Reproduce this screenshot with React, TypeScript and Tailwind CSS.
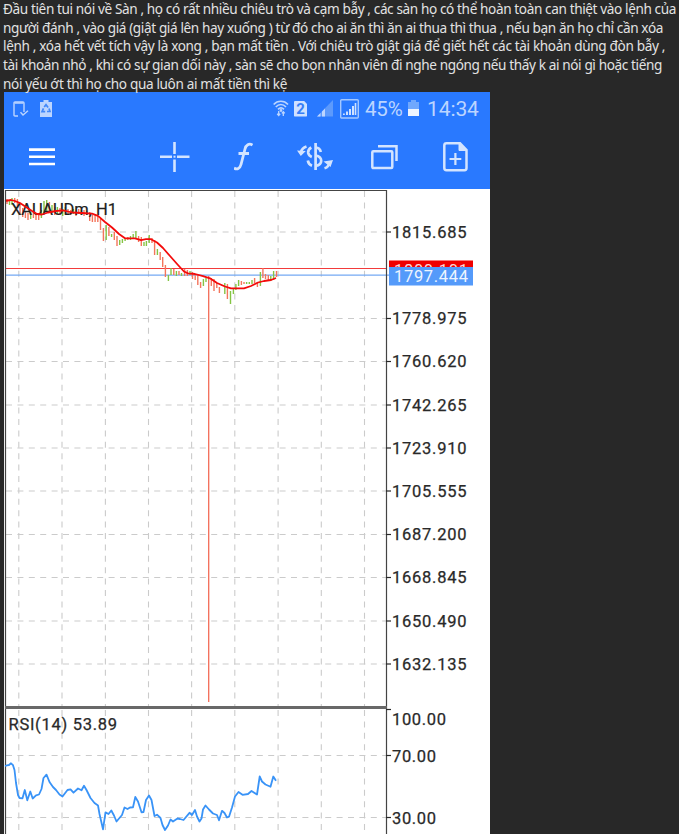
import React from 'react';

const post = [
  { text: 'Đầu tiên tui nói về Sàn , họ có rất nhiều chiêu trò và cạm bẫy , các sàn họ có thể hoàn toàn can thiệt vào lệnh của', width: 673 },
  { text: 'người đánh , vào giá (giật giá lên hay xuống ) từ đó cho ai ăn thì ăn ai thua thì thua , nếu bạn ăn họ chỉ cần xóa', width: 660 },
  { text: 'lệnh , xóa hết vết tích vậy là xong , bạn mất tiền . Với chiêu trò giật giá để giết hết các tài khoản dùng đòn bẫy ,', width: 662 },
  { text: 'tài khoản nhỏ , khi có sự gian dối này , sàn sẽ cho bọn nhân viên đi nghe ngóng nếu thấy k ai nói gì hoặc tiếng', width: 659 },
  { text: 'nói yếu ớt thì họ cho qua luôn ai mất tiền thì kệ', width: 284 },
];

const prices = [
  { label: '1815.685', y: 232 },
  { label: '1778.975', y: 318.5 },
  { label: '1760.620', y: 361.5 },
  { label: '1742.265', y: 405 },
  { label: '1723.910', y: 448 },
  { label: '1705.555', y: 491 },
  { label: '1687.200', y: 534.5 },
  { label: '1668.845', y: 577.5 },
  { label: '1650.490', y: 621 },
  { label: '1632.135', y: 664 },
];

const rsiLevels = [
  { label: '100.00', y: 709.5, base: 724.5, width: 54 },
  { label: '70.00', y: 755.5, base: 762, width: 44 },
  { label: '30.00', y: 817.5, base: 824, width: 44 },
];

const columns = [18.8, 62, 105.4, 148.5, 191.6, 234.8, 278.1, 321.3, 364.5];

// x, high, low, rising
const candles: [number, number, number, boolean][] = [
  [7, 199, 204, false], [9.5, 201, 205, true], [12, 198, 205, true], [14.7, 198, 203, false],
  [17.4, 199, 206, false], [20, 203, 215, false], [22.7, 208, 217, false], [25.4, 211, 218, false],
  [28, 213, 220, false], [30.7, 212, 219, true], [33.4, 211, 218, false], [36, 213, 220, false],
  [38.7, 213, 220, false], [41.4, 210, 218, true], [44, 201, 213, true], [46.7, 200, 211, true],
  [49.4, 202, 213, false], [52, 205, 213, true], [54.7, 207, 215, false], [57.4, 207, 214, true],
  [60, 208, 215, false], [62.7, 209, 216, true], [65.4, 207, 214, true], [68, 209, 215, false],
  [70.7, 210, 215, false], [73.4, 209, 214, true], [76, 210, 216, false], [78.7, 209, 214, false],
  [81.4, 210, 215, true], [84, 210, 216, false], [86.7, 211, 215, true], [89.7, 212, 221, false],
  [92.4, 215, 222, false], [95.1, 215, 222, false], [97.8, 216, 222, false], [100.5, 219, 230, false],
  [103.4, 228, 241, false], [106.2, 225, 240, true], [108.9, 227, 236, false], [111.6, 234, 237, true],
  [114.3, 232, 240, false], [117, 236, 246, false], [119.7, 240, 245, true], [122.4, 239, 243, true],
  [125.1, 238, 241, true], [127.8, 237, 240, false], [130.5, 236, 240, true], [133.2, 234, 239, true],
  [135.9, 231, 239, true], [138.6, 236, 242, false], [141.3, 237, 246, false], [144, 242, 246, true],
  [146.4, 241, 246, true], [149.2, 235, 243, true], [152, 238, 243, false], [154.6, 240, 255, false],
  [157.4, 249, 255, true], [160.2, 252, 260, false], [162.7, 257, 267, false], [165.4, 265, 277, false],
  [168.4, 275, 281, true], [171, 268, 275, true], [173.8, 269, 275, false], [176.4, 271, 276, true],
  [179, 271, 275, false], [181.5, 273, 276, true], [184.6, 269, 276, false], [187.4, 270, 276, false],
  [190, 271, 275, true], [192.5, 272, 279, false], [195.2, 275, 280, false], [197.8, 275, 285, false],
  [200.6, 282, 288, false], [203.4, 279, 286, true], [206, 278, 282, true], [211.3, 278, 286, false],
  [214, 279, 291, false], [216.8, 283, 288, false], [219.4, 287, 293, false], [222, 285, 286, false],
  [224.8, 283, 294, true], [227.4, 284, 299, false], [230.5, 291, 304, true], [233.4, 288, 294, true],
  [235.9, 284, 290, true], [238.6, 280, 286, true], [241.4, 281, 285, false], [244, 282, 284, false],
  [246.6, 282, 284, true], [249.3, 282, 284, true], [252, 280, 284, true], [254.6, 278, 283, false],
  [257.4, 282, 287, false], [260.4, 272, 286, true], [262.9, 268, 278, false], [265.5, 274, 279, false],
  [268.3, 275, 281, false], [270.8, 276, 281, true], [273.6, 271, 280, true], [276.5, 271, 277, false],
];

const average =
  '5,201 11,200 15,201 20,203 26,207 32,211 37,214 42,214.5 48,212.5 56,211 63,210.3 72,212.5 82,213 92,213.6 98,215.8 105,222 112,227.5 119,234 125,238.3 135,238.4 141,240.2 146,239.2 151,239.2 157,242.5 163,248 170,256 178,265 184,271.5 188,273.4 195,274 203,276.2 210,278.3 217,283 225,286.5 231,288.3 244,288.4 251,286 258,282.5 264,281 271,280 276,278';

const rsi =
  '5,766 7,765.3 9,765 11,763.3 13,765.2 14.5,770 16,783 18,795 19.5,798 22.5,798.3 24.8,790 27.3,800.3 30.3,791.5 32.7,798.5 36,795.3 39,794.5 41.5,789 43.5,778 46.5,774.6 49.5,782 53,787 56,790 59.5,794.5 62.5,796.5 67.5,790 70.5,789.3 73.5,792.7 78,788.5 81.5,790.3 84,785.7 86.5,790 90.5,798 94.5,803 98,805.5 99.5,814 103,829.3 105.5,812.4 108.5,814 111.3,810.5 114,815.5 116.5,821.5 122,815 124.5,807.5 127.5,809 130,807.5 133,807.3 135.3,797 138,801.5 141.5,812.3 143.5,812 146,800 149,795.5 151.5,800 154.5,816 157,814.7 160.5,818 162.5,825 165,830 168,825.5 170.5,819.5 173,821.5 177.5,818.5 180,819 183.5,820 189.5,812.8 192,815 195,810 197,816.5 199.5,821.5 201.5,818.5 203,809.5 205.5,805.5 209,809.5 213,813.5 217,815 219,820.3 222,810.8 224.5,813 227,817.5 229,816.7 232,807.5 235,796.5 238.5,792 242.5,794.8 248,794 251.5,791 257,794.5 259.7,776.5 262,781.5 265.5,784.5 270.5,786.7 273.3,776.5 276,780.7';

const StatusBar: React.FC = () => (
  <div className="flex h-[33px] items-center pl-[9px] font-['Roboto',sans-serif] text-[#bcd5ff]">
    <svg width="16" height="18" viewBox="0 0 16 18" fill="none" stroke="currentColor" strokeWidth="1.4">
      <path d="M5 16H2Q1 16 1 15V3Q1 2 2 2H10Q11 2 11 3V12" />
      <path d="M1.5 3H10.5M7.5 12.3L10 15L15 10.7" />
    </svg>
    <svg className="ml-[11px]" width="13" height="18" viewBox="0 0 13 18">
      <path d="M0 2H3.5V0H8.5V2H12V17H0Z" fill="currentColor" />
      <path d="M4.2 7L6 4.7L8.1 7.4M9 8.5L10 11.5H7M5.2 11.7H2L3.5 8.3" fill="none" stroke="#4389f9" strokeWidth="1.7" />
    </svg>
    <svg className="ml-[220px]" width="16" height="18" viewBox="0 0 16 18" fill="none" stroke="currentColor" strokeWidth="1.6">
      <path d="M.7 4.5C4.5.2 11.2.2 15 4.5M2.8 7C5.8 3.7 10 3.7 13 7M5 9.4C7 7.3 9 7.3 11 9.4" />
      <circle cx="8" cy="10.5" r=".6" fill="currentColor" />
      <path d="M5.7 11V15M4.2 13.8L5.7 15.5L7.2 13.8M10.3 16V12M8.8 13.4L10.3 11.7L11.8 13.4" strokeWidth="1.3" />
    </svg>
    <div className="ml-[5px] flex h-4 w-[13px] items-center justify-center rounded-[1px] bg-[#cfe1ff] text-[15px] leading-4 font-bold text-[#367ff8] [clip-path:polygon(0_0,75%_0,100%_22%,100%_100%,0_100%)]">2</div>
    <svg className="ml-[10px]" width="16" height="17" viewBox="0 0 16 17">
      <path d="M0 16.5L16 0V16.5Z" fill="#5d9afc" />
      <path d="M0 16.5L3.5 13V16.5ZM5 16.5V11.5L8 8.5V16.5Z" fill="#bcd5ff" />
    </svg>
    <svg className="ml-[7px]" width="19" height="20" viewBox="0 0 19 20">
      <rect x=".7" y=".7" width="17.6" height="18.3" rx="1" fill="none" stroke="#a5c8ff" strokeWidth="1.4" />
      <path d="M3 16V14.5H4.8V16ZM6 16V12.5H8V16ZM9 16V10H11V16ZM12 16V7H14V16ZM14.7 16V4H16.3V16Z" fill="#cfe1ff" />
    </svg>
    <span className="ml-[6px] w-[40px] pt-px text-[20.5px] leading-6 tracking-[-0.2px]">45%</span>
    <svg className="ml-[3px]" width="12" height="17" viewBox="0 0 12 17">
      <path d="M0 2H3V0H8V2H11V16H0Z" fill="#70a8fd" />
      <path d="M0 9H11V16H0Z" fill="#eef5ff" />
    </svg>
    <span className="ml-[7px] pt-px text-[21px] leading-6 tracking-[-0.1px]">14:34</span>
  </div>
);

const Toolbar: React.FC = () => (
  <div className="flex h-[63px] items-center pl-[25px] text-[#d3e4ff]">
    <svg width="26" height="20" viewBox="0 0 26 20" stroke="white" strokeWidth="2.6">
      <path d="M0 2.6H26M0 9.8H26M0 17H26" />
    </svg>
    <svg className="ml-[105px]" width="30" height="30" viewBox="0 0 30 30" fill="none" stroke="currentColor" strokeWidth="2.6">
      <path d="M14.5 0V12M14.5 17.5V30M0 14.7H12M17 14.7H29.5" />
      <path d="M13.5 14.7H15.5" strokeWidth="2" />
    </svg>
    <svg className="ml-[44px]" width="19" height="30" viewBox="0 0 19 30" fill="none" stroke="currentColor" strokeWidth="2.8">
      <path d="M0 26C3 28 6 26.5 7 22.5L11 7C12 3 15 1 18.5 3M4.5 11.5H15" />
    </svg>
    <svg className="ml-[44px]" width="36" height="30" viewBox="0 0 36 30" fill="none" stroke="currentColor" strokeWidth="2.7">
      <path d="M18.6 1V28" />
      <path d="M14.3 5.5Q10.8 7.5 11.2 11Q11.8 13.8 14.8 15M10.8 18.5Q11.5 22.5 15 23.8" />
      <path d="M23.8 10Q23 5.8 18.6 5.5M18.6 13.5Q24.2 14.5 24.2 18.8Q24.2 23 18.6 24" />
      <path d="M4 10Q5 6 9.5 4.5M32.5 19.5Q32 25 27.5 26.3" />
      <path d="M0 8.5L8.8 9L3.8 14ZM26.5 19.5L36 18L33.5 25Z" fill="currentColor" stroke="none" />
    </svg>
    <svg className="ml-[38px]" width="28" height="26" viewBox="0 0 28 26" fill="none" stroke="currentColor" strokeWidth="2.5">
      <rect x="1.3" y="7.3" width="20" height="16.8" rx="1" />
      <path d="M7 2.2H25.5V17" />
    </svg>
    <svg className="ml-[44px]" width="26" height="30" viewBox="0 0 26 30" fill="none" stroke="currentColor" strokeWidth="2.5">
      <path d="M3.5 1.3H17L23.5 8V26Q23.5 28.2 21.5 28.2H3.5Q1.3 28.2 1.3 26V3.5Q1.3 1.3 3.5 1.3Z" />
      <path d="M16 1.5V8.5H23.5Z" fill="currentColor" strokeWidth="1" />
      <path d="M12.4 11V23M6.5 17H18.3" strokeWidth="2.2" />
    </svg>
  </div>
);

const Chart: React.FC = () => (
  <svg className="block bg-white font-['Roboto',sans-serif]" width="486" height="645" viewBox="4 189 486 645">
    <g stroke="#cbcbcb" strokeWidth="1.1" strokeDasharray="6 5.4">
      {columns.map((x) => (
        <path key={x} d={`M${x} 191V706M${x} 710V834`} />
      ))}
      {[...prices.map((p) => p.y), 755.5, 817.5].map((y) => (
        <path key={y} d={`M6 ${y}H386`} />
      ))}
    </g>

    <path d="M5 268.5H386" stroke="#f23b3b" strokeWidth="1.2" />
    <path d="M5 275.2H391" stroke="#75a9f3" strokeWidth="1.2" />
    {candles.map(([x, high, low, rising]) => (
      <path key={x} d={`M${x} ${high}V${low}`} stroke={rising ? '#84c444' : '#f4755c'} strokeWidth="1.4" />
    ))}
    <path d="M208.7 276V702" stroke="#f36c57" strokeWidth="1.3" />
    <text x="11" y="214.5" fontSize="16.5" fill="#202020" stroke="#202020" strokeWidth=".2" textLength="106" lengthAdjust="spacing">XAUAUDm, H1</text>
    <polyline points={average} fill="none" stroke="#f30b0b" strokeWidth="1.8" strokeLinejoin="round" />

    <path d="M5.5 834V190.5H386.5V834" fill="none" stroke="#444" strokeWidth="1.2" />
    <path d="M5 707.5H387" stroke="#686868" strokeWidth="2.8" />

    <g fill="#292929" stroke="#292929" strokeWidth=".25" fontSize="16.5">
      {prices.map((p) => (
        <g key={p.label}>
          <path d={`M386 ${p.y}H391`} strokeWidth="1.2" />
          <text x="392" y={Math.floor(p.y) + 6.4} textLength="74.5" lengthAdjust="spacing">{p.label}</text>
        </g>
      ))}
      {rsiLevels.map((l) => (
        <g key={l.label}>
          <path d={`M386 ${l.y}H391`} strokeWidth="1.2" />
          <text x="392" y={l.base} textLength={l.width} lengthAdjust="spacing">{l.label}</text>
        </g>
      ))}
      <text x="8.5" y="730" textLength="108.5" lengthAdjust="spacing">RSI(14) 53.89</text>
    </g>

    <rect x="389" y="260.5" width="84" height="18" fill="#ef0000" />
    <text x="394" y="276" fontSize="16.5" fill="#ffd5d5" textLength="74" lengthAdjust="spacing">1800.101</text>
    <rect x="389" y="267" width="84" height="18.5" fill="#549afa" />
    <text x="394" y="282" fontSize="16.5" fill="#edf5ff" textLength="74" lengthAdjust="spacing">1797.444</text>

    <polyline points={rsi} fill="none" stroke="#3993f7" strokeWidth="1.8" strokeLinejoin="round" />
  </svg>
);

const App: React.FC = () => {
  const lines = React.useRef<HTMLParagraphElement>(null);

  // spread each line to its measured width
  React.useLayoutEffect(() => {
    lines.current?.querySelectorAll('span').forEach((span, i) => {
      span.style.letterSpacing = '0px';
      const natural = span.getBoundingClientRect().width;
      span.style.letterSpacing = `${(post[i].width - natural) / post[i].text.length}px`;
    });
  }, []);

  return (
    <div className="h-[834px] w-[679px] overflow-hidden bg-[#282828]">
      <p ref={lines} className="flex h-[92px] flex-col items-start pl-[3px] font-['Noto_Sans','Open_Sans',sans-serif] text-[13.6px] leading-[18.7px] text-[#e2e2e2]">
        {post.map((line) => (
          <span key={line.text} className="whitespace-nowrap">{line.text}</span>
        ))}
      </p>
      <div className="ml-1 w-[486px]">
        <div className="h-[97px] bg-[#2979ff]">
          <StatusBar />
          <Toolbar />
        </div>
        <Chart />
      </div>
    </div>
  );
};

export default App;
